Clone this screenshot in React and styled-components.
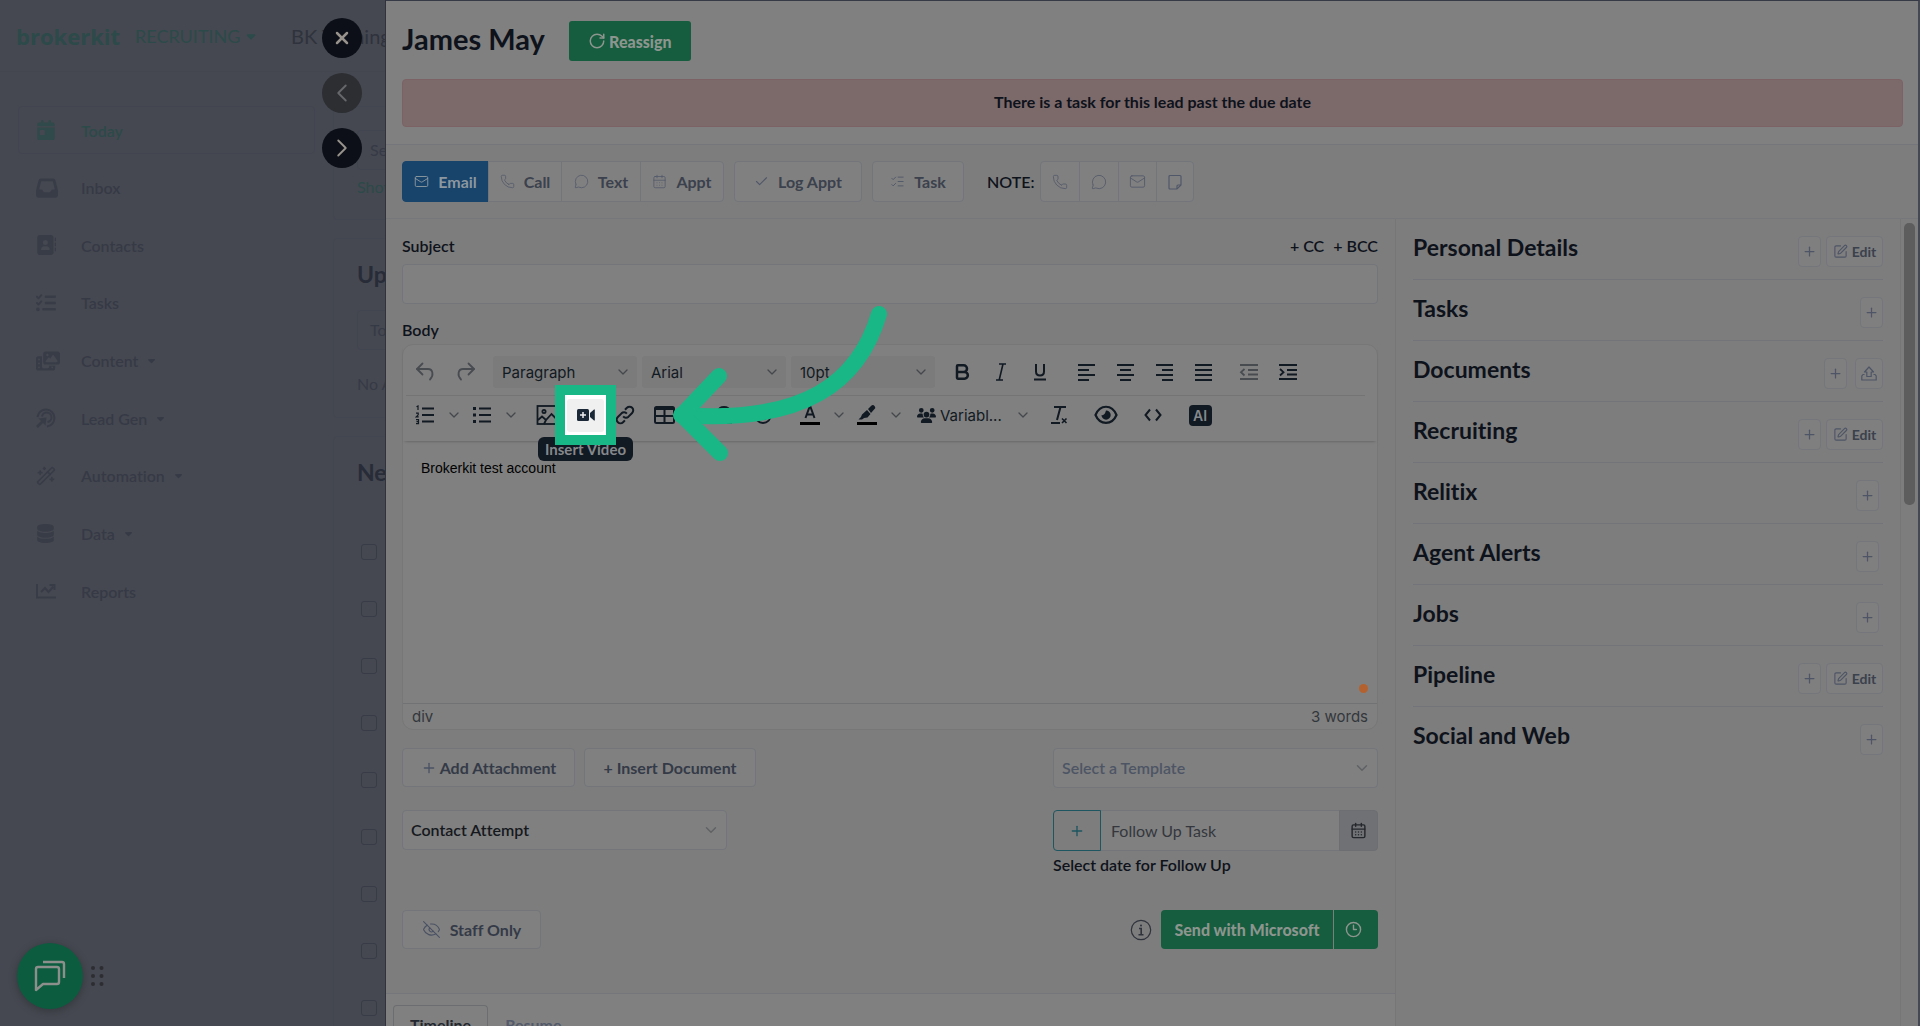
import React from "react";
import styled, { createGlobalStyle } from "styled-components";
import {
  Bold,
  CalendarDays,
  Check,
  ChevronDown,
  ChevronLeft,
  ChevronRight,
  Clock3,
  EyeOff,
  ListChecks,
  Mail,
  MessageCircle,
  Phone,
  Plus,
  RotateCw,
  SquarePen,
  WandSparkles,
  X,
} from "lucide-react";
import {
  FaAddressBook,
  FaCalendarDay,
  FaCaretDown,
  FaDatabase,
  FaInbox,
  FaListCheck,
  FaPhotoFilm,
  FaUsers,
} from "react-icons/fa6";

const colors = {
  shade: "#454850",
  shadeText: "#363a46",
  shadeGreen: "#2c4a49",
  surface: "#7d7d7d",
  white: "#808080",
  border: "#73757a",
  ink: "#0e121b",
  tool: "#111922",
  muted: "#3b414d",
  green: "#165c3e",
  accent: "#19b785",
};

const menu = [
  { label: "Today", icon: <FaCalendarDay size={20} />, active: true },
  { label: "Inbox", icon: <FaInbox size={22} /> },
  { label: "Contacts", icon: <FaAddressBook size={20} /> },
  { label: "Tasks", icon: <FaListCheck size={20} /> },
  { label: "Content", icon: <FaPhotoFilm size={24} />, more: true },
  { label: "Lead Gen", icon: <TargetIcon />, more: true },
  { label: "Automation", icon: <WandSparkles size={20} strokeWidth={2} />, more: true },
  { label: "Data", icon: <FaDatabase size={19} />, more: true },
  { label: "Reports", icon: <ReportIcon /> },
];

const sections = [
  { title: "Personal Details", edit: true },
  { title: "Tasks" },
  { title: "Documents", upload: true },
  { title: "Recruiting", edit: true },
  { title: "Relitix", inset: true },
  { title: "Agent Alerts", inset: true },
  { title: "Jobs", inset: true },
  { title: "Pipeline", edit: true },
  { title: "Social and Web" },
];

const leads = [1, 2, 3, 4, 5, 6, 7, 8, 9];

const App = () => {
  return (
    <Screen>
      <GlobalStyle />
      <Backdrop>
        <TopBar>
          <Logo>brokerkit</Logo>
          <Product>
            RECRUITING <FaCaretDown size={14} />
          </Product>
          <Account>BK Training</Account>
        </TopBar>
        <BackdropBody>
          <SideNav>
            {menu.map((item) => (
              <NavItem href="#" key={item.label} $active={item.active}>
                <NavIcon>{item.icon}</NavIcon>
                {item.label}
                {item.more && <FaCaretDown size={11} />}
              </NavItem>
            ))}
          </SideNav>
          <LeadColumn>
            <LeadCard $height={114}>
              <FakeField>Search</FakeField>
              <ShowLink href="#">Show</ShowLink>
            </LeadCard>
            <LeadCard $height={180}>
              <LeadTitle>Upcoming</LeadTitle>
              <FakeField>Today</FakeField>
              <EmptyText>No Appointments</EmptyText>
            </LeadCard>
            <LeadCard $height={640}>
              <LeadTitle>New Leads</LeadTitle>
              <CheckList>
                {leads.map((lead) => (
                  <LeadCheck key={lead} type="checkbox" aria-label={"Lead " + lead} />
                ))}
              </CheckList>
            </LeadCard>
          </LeadColumn>
        </BackdropBody>
        <DrawerControls>
          <RoundButton aria-label="Close">
            <X size={20} strokeWidth={3} />
          </RoundButton>
          <RoundButton aria-label="Previous" $dim>
            <ChevronLeft size={30} strokeWidth={1.5} />
          </RoundButton>
          <RoundButton aria-label="Next">
            <ChevronRight size={30} strokeWidth={1.5} />
          </RoundButton>
        </DrawerControls>
        <ChatWidget>
          <ChatButton aria-label="Chat">
            <ChatIcon />
          </ChatButton>
          <DotsIcon />
        </ChatWidget>
      </Backdrop>

      <Drawer>
        <DrawerHeader>
          <TitleRow>
            <Name>James May</Name>
            <GreenButton>
              <RotateCw size={18} strokeWidth={2} />
              Reassign
            </GreenButton>
          </TitleRow>
          <Alert>There is a task for this lead past the due date</Alert>
        </DrawerHeader>

        <ActionBar>
          <ButtonGroup>
            <ActionButton $primary $width={87}>
              <Mail size={15} strokeWidth={1.5} />
              Email
            </ActionButton>
            <ActionButton $width={74}>
              <Phone size={15} strokeWidth={1.2} />
              Call
            </ActionButton>
            <ActionButton $width={80}>
              <MessageCircle size={15} strokeWidth={1.2} />
              Text
            </ActionButton>
            <ActionButton $width={84}>
              <CalendarDays size={15} strokeWidth={1.2} />
              Appt
            </ActionButton>
          </ButtonGroup>
          <ActionButton $width={128}>
            <Check size={15} strokeWidth={1.8} />
            Log Appt
          </ActionButton>
          <ActionButton $width={92}>
            <ListChecks size={15} strokeWidth={1.5} />
            Task
          </ActionButton>
          <NoteLabel>NOTE:</NoteLabel>
          <ButtonGroup>
            <ActionButton $width={40} aria-label="Call note">
              <Phone size={16} strokeWidth={1.2} />
            </ActionButton>
            <ActionButton $width={40} aria-label="Text note">
              <MessageCircle size={16} strokeWidth={1.2} />
            </ActionButton>
            <ActionButton $width={39} aria-label="Email note">
              <Mail size={17} strokeWidth={1.2} />
            </ActionButton>
            <ActionButton $width={38} aria-label="Note">
              <NoteIcon />
            </ActionButton>
          </ButtonGroup>
        </ActionBar>

        <DrawerBody>
          <MainColumn>
            <Composer>
              <FieldHead>
                <label htmlFor="subject">Subject</label>
                <CopyLinks>
                  <a href="#">+ CC</a>
                  <a href="#">+ BCC</a>
                </CopyLinks>
              </FieldHead>
              <SubjectInput id="subject" type="text" />
              <BodyLabel>Body</BodyLabel>
              <Editor />

              <SplitRow>
                <Inline>
                  <BoxButton $width={173}>
                    <Plus size={16} strokeWidth={2} />
                    Add Attachment
                  </BoxButton>
                  <BoxButton $width={172}>+ Insert Document</BoxButton>
                </Inline>
                <SelectBox>
                  <Select aria-label="Template" $placeholder defaultValue="Select a Template">
                    <option>Select a Template</option>
                  </Select>
                  <ChevronDown size={18} strokeWidth={2} />
                </SelectBox>
              </SplitRow>

              <SplitRow>
                <SelectBox>
                  <Select aria-label="Type" defaultValue="Contact Attempt">
                    <option>Contact Attempt</option>
                  </Select>
                  <ChevronDown size={18} strokeWidth={2} />
                </SelectBox>
                <FollowUp>
                  <InputGroup>
                    <AddButton aria-label="Add follow up">
                      <Plus size={16} strokeWidth={2} />
                    </AddButton>
                    <FollowInput id="follow-up" type="text" placeholder="Follow Up Task" />
                    <DateButton aria-label="Pick a date">
                      <CalendarDays size={17} strokeWidth={2} />
                    </DateButton>
                  </InputGroup>
                  <label htmlFor="follow-up">Select date for Follow Up</label>
                </FollowUp>
              </SplitRow>

              <SendRow>
                <BoxButton $width={139} $gap={9}>
                  <EyeOff size={19} strokeWidth={1.4} />
                  Staff Only
                </BoxButton>
                <Inline>
                  <InfoIcon />
                  <SendGroup>
                    <SendButton>Send with Microsoft</SendButton>
                    <ScheduleButton aria-label="Schedule">
                      <Clock3 size={17} strokeWidth={2} />
                    </ScheduleButton>
                  </SendGroup>
                </Inline>
              </SendRow>
            </Composer>
            <Tabs>
              <Tab $active>Timeline</Tab>
              <Tab>Resume</Tab>
            </Tabs>
          </MainColumn>

          <Aside>
            {sections.map((section) => (
              <Section key={section.title} $inset={section.inset}>
                <h2>{section.title}</h2>
                <SectionButtons $wide={section.upload}>
                  <SmallButton aria-label={"Add to " + section.title}>
                    <Plus size={15} strokeWidth={2} />
                  </SmallButton>
                  {section.edit && (
                    <SmallButton $width={57}>
                      <SquarePen size={15} strokeWidth={1.8} />
                      Edit
                    </SmallButton>
                  )}
                  {section.upload && (
                    <SmallButton $width={28} aria-label="Upload">
                      <UploadIcon />
                    </SmallButton>
                  )}
                </SectionButtons>
              </Section>
            ))}
          </Aside>
          <ScrollTrack>
            <ScrollThumb />
          </ScrollTrack>
        </DrawerBody>
      </Drawer>
    </Screen>
  );
};

export default App;

const Editor = () => {
  return (
    <EditorFrame>
      <Toolbar>
        <ToolRow>
          <ToolGroup $gap={3}>
            <Tool $dim aria-label="Undo">
              <UndoIcon />
            </Tool>
            <Tool $dim aria-label="Redo">
              <UndoIcon flip />
            </Tool>
          </ToolGroup>
          <SelectGroup>
            {["Paragraph", "Arial", "10pt"].map((value) => (
              <FormatBox key={value}>
                <FormatSelect aria-label={value} defaultValue={value}>
                  <option>{value}</option>
                </FormatSelect>
                <ChevronDown size={16} strokeWidth={2} />
              </FormatBox>
            ))}
          </SelectGroup>
          <ToolGroup>
            <Tool aria-label="Bold">
              <Bold size={20} strokeWidth={3} />
            </Tool>
            <Tool aria-label="Italic">
              <ItalicIcon />
            </Tool>
            <Tool aria-label="Underline">
              <UnderlineIcon />
            </Tool>
          </ToolGroup>
          <ToolGroup>
            {["left", "center", "right", "full"].map((side) => (
              <Tool key={side} aria-label={"Align " + side}>
                <AlignIcon side={side} />
              </Tool>
            ))}
          </ToolGroup>
          <ToolGroup>
            <Tool $dim aria-label="Outdent">
              <IndentIcon flip />
            </Tool>
            <Tool aria-label="Indent">
              <IndentIcon />
            </Tool>
          </ToolGroup>
        </ToolRow>
        <ToolRow $second>
          <ToolGroup>
            <Tool aria-label="Numbered list">
              <ListIcon numbered />
            </Tool>
            <SplitArrow />
            <Tool aria-label="Bullet list">
              <ListIcon />
            </Tool>
            <SplitArrow />
          </ToolGroup>
          <ToolGroup>
            <Tool aria-label="Image">
              <ImageIcon />
            </Tool>
            <Spot>
              <Tooltip>Insert Video</Tooltip>
              <VideoFrame>
                <VideoButton aria-label="Insert Video">
                  <VideoIcon />
                </VideoButton>
              </VideoFrame>
              <PointerArrow />
            </Spot>
            <Tool aria-label="Link">
              <LinkIcon />
            </Tool>
            <Tool aria-label="Table">
              <TableIcon />
            </Tool>
          </ToolGroup>
          <ToolGroup $start={13}>
            <Tool aria-label="Special character">
              <OmegaIcon />
            </Tool>
            <Tool aria-label="Emoji">
              <SmileIcon />
            </Tool>
          </ToolGroup>
          <ToolGroup>
            <Tool aria-label="Text color">
              <TextColorIcon />
            </Tool>
            <SplitArrow />
            <Tool aria-label="Highlight">
              <MarkerIcon />
            </Tool>
            <SplitArrow />
          </ToolGroup>
          <VariableButton>
            <FaUsers size={19} />
            <span>Variabl...</span>
            <ChevronDown size={16} strokeWidth={2} />
          </VariableButton>
          <ToolGroup $gap={9}>
            <Tool aria-label="Clear formatting">
              <ClearIcon />
            </Tool>
            <Tool aria-label="Preview">
              <EyeIcon />
            </Tool>
            <Tool aria-label="Source code">
              <CodeIcon />
            </Tool>
            <Tool>
              <AiBadge>AI</AiBadge>
            </Tool>
          </ToolGroup>
        </ToolRow>
      </Toolbar>
      <EditArea>
        Brokerkit test account
        <StatusDot />
      </EditArea>
      <StatusBar>
        <span>div</span>
        <span>3 words</span>
      </StatusBar>
    </EditorFrame>
  );
};

const SplitArrow = () => (
  <ArrowButton aria-label="More options">
    <ChevronDown size={16} strokeWidth={2} />
  </ArrowButton>
);

/* ---------- icons ---------- */

function TargetIcon() {
  return (
    <svg width="20" height="20" viewBox="0 0 20 20" fill="none" stroke="currentColor" strokeWidth="2">
      <path d="M1.500 9a8.500 8.500 0 1 1 9.500 9.500" />
      <path d="M6 8.500a4.800 4.800 0 1 1 5.500 5.500" />
      <path d="M1 19l6-6" strokeWidth="2.600" />
      <path d="M2.500 10.500L10.500 9.500 9.500 17.500z" fill="currentColor" stroke="none" />
    </svg>
  );
}

function ReportIcon() {
  return (
    <svg width="20" height="16" viewBox="0 0 20 16" fill="none" stroke="currentColor" strokeWidth="2">
      <path d="M1 1v13.500h19" />
      <path d="M5 9l4-4 3.500 4 5-5.500" />
      <path d="M13.500 2H18.500V7" />
    </svg>
  );
}

const ChatIcon = () => (
  <svg width="32" height="32" viewBox="0 0 32 32" fill="none" stroke="#8d8f8d" strokeWidth="2.400">
    <path d="M2 30V9q0-2 2-2h19q2 0 2 2v13q0 2-2 2H9z" strokeLinejoin="round" />
    <path d="M9 2h19q2 0 2 2v14" />
  </svg>
);

const DotsIcon = () => (
  <svg width="13" height="22" viewBox="0 0 13 22" fill="#2c2d31">
    {[3, 11, 19].map((y) => (
      <g key={y}>
        <circle cx="2" cy={y} r="2" />
        <circle cx="10.500" cy={y} r="2" />
      </g>
    ))}
  </svg>
);

const NoteIcon = () => (
  <svg width="14" height="16" viewBox="0 0 14 16" fill="none" stroke="currentColor" strokeWidth="1.200">
    <path d="M1 2.500Q1 1.500 2 1.500h10q1 0 1 1V11l-4 4H2q-1 0-1-1z" />
    <path d="M9 15v-3q0-1 1-1h3" />
  </svg>
);

const InfoIcon = () => (
  <svg width="22" height="22" viewBox="0 0 22 22" fill="none" stroke="#2f333c" strokeWidth="1.200">
    <circle cx="11" cy="11" r="9.700" />
    <path d="M9 9.500h2.200V15.500M8.500 15.700h5" strokeWidth="1.600" />
    <circle cx="11" cy="6.500" r="1" fill="#2f333c" stroke="none" />
  </svg>
);

const UploadIcon = () => (
  <svg width="16" height="15" viewBox="0 0 16 15" fill="none" stroke="currentColor" strokeWidth="1.200">
    <path d="M3.500 8.500H2L.8 10v4h14.400v-4L14 8.500h-1.500" />
    <path d="M8 1L3.500 6h2.300v4.500h4.400V6h2.300z" strokeLinejoin="round" />
  </svg>
);

const UndoIcon = ({ flip }) => (
  <svg width="20" height="20" viewBox="0 0 20 20" fill="none" stroke="currentColor" strokeWidth="1.800">
    <g transform={flip ? "matrix(-1 0 0 1 20 0)" : undefined} strokeLinecap="round">
      <path d="M7.500 1.500L2 7l5.500 5.500" strokeLinejoin="round" />
      <path d="M2 7h11c5 0 6 6.500 2 10.500" />
    </g>
  </svg>
);

const ItalicIcon = () => (
  <svg width="12" height="20" viewBox="0 0 12 20" fill="none" stroke="currentColor" strokeWidth="1.600">
    <path d="M4 2h7M1 18h7M8 2L4.200 18" />
  </svg>
);

const UnderlineIcon = () => (
  <svg width="14" height="20" viewBox="0 0 14 20" fill="none" stroke="currentColor" strokeWidth="2">
    <path d="M3 2v7.500q0 4 4 4t4-4V2" />
    <path d="M1 17.500h12" />
  </svg>
);

const alignLines = {
  left: "M1 2h17M1 7h11M1 12h17M1 17h11",
  center: "M1 2h17M4 7h11M1 12h17M4 17h11",
  right: "M1 2h17M7 7h11M1 12h17M7 17h11",
  full: "M1 2h17M1 7h17M1 12h17M1 17h17",
};

const AlignIcon = ({ side }) => (
  <svg width="19" height="19" viewBox="0 0 19 19" fill="none" stroke="currentColor" strokeWidth="2">
    <path d={alignLines[side]} />
  </svg>
);

const IndentIcon = ({ flip }) => (
  <svg width="20" height="18" viewBox="0 0 20 18" fill="none" stroke="currentColor" strokeWidth="2">
    <path d="M1 2h18M9 7h10M9 11.500h10M1 16h18" />
    <path d={flip ? "M5.500 6L2 9.200l3.500 3.300" : "M2 6l3.500 3.200L2 12.500"} strokeWidth="1.800" />
  </svg>
);

const ListIcon = ({ numbered }) => (
  <svg width="20" height="20" viewBox="0 0 20 20" fill="none" stroke="currentColor" strokeWidth="2">
    <path d="M7 3.500h12M7 10h12M7 16.500h12" />
    {numbered ? (
      <path
        d="M1.500 1.800L3 1v4M1 8.200h2.200v1.600L1.200 11.800h2.500M1 14.600h2.500v4H1M1.500 16.600h2"
        strokeWidth="1.200"
      />
    ) : (
      <path d="M1 3.500h3M1 10h3M1 16.500h3" strokeWidth="3" />
    )}
  </svg>
);

const ImageIcon = () => (
  <svg width="22" height="20" viewBox="0 0 22 20" fill="none" stroke="currentColor" strokeWidth="1.800">
    <rect x="1.500" y="1" width="19" height="18" />
    <circle cx="8" cy="6.500" r="1.600" />
    <path d="M2 15l4-3.500 4 3.500 5.500-6 5 5M8 19l2-4" />
  </svg>
);

const VideoIcon = () => (
  <svg width="18" height="12" viewBox="0 0 18 12" fill="#1b2838">
    <rect x="0" y="0" width="12" height="12" rx="1.500" />
    <path d="M13 4l4-3.500h.8v11H17L13 8z" />
    <path d="M6 3v6M3 6h6" stroke="#f0f0f0" strokeWidth="1.500" />
  </svg>
);

const LinkIcon = () => (
  <svg width="22" height="22" viewBox="0 0 24 24" fill="none" stroke="currentColor" strokeWidth="2.200">
    <path d="M10 13.500a4 4 0 0 0 5.800.3l4-4a4 4 0 0 0-5.700-5.700L12 6.200" />
    <path d="M14 10.500a4 4 0 0 0-5.800-.3l-4 4a4 4 0 0 0 5.700 5.700l2-2" />
  </svg>
);

const TableIcon = () => (
  <svg width="21" height="18" viewBox="0 0 21 18" fill="none" stroke="currentColor" strokeWidth="2">
    <rect x="1" y="1" width="19" height="16" rx="1.500" />
    <path d="M1 2.500h19" strokeWidth="3" />
    <path d="M1 10h19M10.500 3v14" />
  </svg>
);

const OmegaIcon = () => (
  <svg width="18" height="18" viewBox="0 0 18 18" fill="none" stroke="currentColor" strokeWidth="2">
    <path d="M1 16.500h5v-2C-1 9 3 1 9 1s10 8 3 13.500v2h5" />
  </svg>
);

const SmileIcon = () => (
  <svg width="18" height="18" viewBox="0 0 18 18" fill="none" stroke="currentColor" strokeWidth="1.800">
    <circle cx="9" cy="9" r="8" />
    <path d="M5 11q4 4 8 0" />
  </svg>
);

const TextColorIcon = () => (
  <svg width="20" height="20" viewBox="0 0 20 20" fill="none" stroke="currentColor" strokeWidth="2">
    <path d="M5.500 13L9.500 2h1L14.500 13M7 9.500h6" />
    <path d="M0 18.500h20" stroke="#000" strokeWidth="3" />
  </svg>
);

const MarkerIcon = () => (
  <svg width="20" height="20" viewBox="0 0 20 20" fill="currentColor">
    <path d="M11 4l3-3q2-2 3.500 0t0 3L14 8zM10 5l3.500 4-3 3.500q-4 0-5.500 2H1.500q3-2 3.500-5z" />
    <path d="M0 18.500h20" stroke="#000" strokeWidth="3" />
  </svg>
);

const ClearIcon = () => (
  <svg width="18" height="20" viewBox="0 0 18 20" fill="none" stroke="currentColor" strokeWidth="2">
    <path d="M4 2h12M10.500 2L7 15M1 18h9" />
    <path d="M12 13.500l4.500 4.500M16.500 13.500L12 18" strokeWidth="1.600" />
  </svg>
);

const EyeIcon = () => (
  <svg width="24" height="20" viewBox="0 0 24 20" fill="none" stroke="currentColor" strokeWidth="2.200">
    <path d="M1.500 10C6-1 18-1 22.500 10 18 20.500 6 20.500 1.500 10z" />
    <path d="M12 5.500a4.600 4.600 0 1 1-4.500 4.500q3 1 4.500-4.500z" fill="currentColor" stroke="none" />
  </svg>
);

const CodeIcon = () => (
  <svg width="18" height="14" viewBox="0 0 18 14" fill="none" stroke="currentColor" strokeWidth="2">
    <path d="M6 1.500L1.500 7 6 12.500M12 1.500L16.500 7 12 12.500" />
  </svg>
);

const PointerArrow = () => (
  <ArrowSvg width="220" height="170" viewBox="0 0 220 170" fill="none" stroke={colors.accent}>
    <path d="M208 14C188 82 134 124 10 115" strokeWidth="16" strokeLinecap="round" />
    <path d="M48 76L11 115l38 38" strokeWidth="16" strokeLinecap="round" strokeLinejoin="round" />
  </ArrowSvg>
);

/* ---------- styles ---------- */

const GlobalStyle = createGlobalStyle`
  * {
    box-sizing: border-box;
  }

  body {
    margin: 0;
    background: ${colors.shade};
    font-family: Lato, "Open Sans", sans-serif;
    font-size: 16px;
    font-variant-ligatures: none;
    color: ${colors.ink};
  }

  button, input, select {
    font: inherit;
    color: inherit;
    margin: 0;
  }

  button {
    padding: 0;
    cursor: pointer;
  }

  a {
    color: inherit;
    text-decoration: none;
  }
`;

const Screen = styled.div`
  display: flex;
  height: 100vh;
  overflow: hidden;
`;

const Backdrop = styled.div`
  position: relative;
  flex: 0 0 386px;
  overflow: hidden;
  color: ${colors.shadeText};
  border-right: 1px solid #30333c;
`;

const TopBar = styled.header`
  display: flex;
  align-items: center;
  height: 72px;
  padding-left: 16px;
  white-space: nowrap;
  border-bottom: 1px solid #43464f;
`;

const Logo = styled.span`
  flex: 0 0 119px;
  font-family: "Open Sans", sans-serif;
  font-size: 22px;
  font-weight: 700;
  color: ${colors.shadeGreen};
`;

const Product = styled.span`
  display: flex;
  align-items: center;
  gap: 4px;
  flex: 0 0 156px;
  font-size: 18px;
  color: ${colors.shadeGreen};
`;

const Account = styled.span`
  font-size: 20px;
  color: #2f333d;
`;

const BackdropBody = styled.div`
  display: flex;
  gap: 18px;
  padding: 34px 0 0 18px;
`;

const SideNav = styled.nav`
  display: flex;
  flex-direction: column;
  justify-content: space-between;
  flex: 0 0 297px;
  height: 509px;
`;

const NavItem = styled.a`
  display: flex;
  align-items: center;
  gap: 8px;
  height: 48px;
  padding-left: 17px;
  border: 1px solid ${(props) => (props.$active ? "#424550" : "transparent")};
  border-radius: 4px;
  font-weight: 600;
  color: ${(props) => (props.$active ? colors.shadeGreen : colors.shadeText)};
`;

const NavIcon = styled.span`
  display: flex;
  width: 37px;
  opacity: 0.8;
`;

const LeadColumn = styled.div`
  display: flex;
  flex-direction: column;
  gap: 18px;
  flex: 0 0 400px;
`;

const LeadCard = styled.section`
  height: ${(props) => props.$height}px;
  padding: 23px;
  border: 1px solid #414650;
  border-radius: 4px;
`;

const FakeField = styled.div`
  height: 40px;
  padding: 9px 12px;
  border: 1px solid #404550;
  border-radius: 4px;
`;

const ShowLink = styled.a`
  display: block;
  margin-top: 7px;
  color: ${colors.shadeGreen};
`;

const LeadTitle = styled.h2`
  margin: 0 0 24px;
  font-size: 23px;
  line-height: 24px;
  color: #272c38;
`;

const EmptyText = styled.p`
  margin: 24px 0 0;
`;

const CheckList = styled.div`
  display: flex;
  flex-direction: column;
  gap: 41px;
  padding: 36px 0 0 4px;
`;

const LeadCheck = styled.input`
  appearance: none;
  width: 16px;
  height: 16px;
  border: 1px solid #383c46;
  border-radius: 3px;
`;

const DrawerControls = styled.div`
  position: absolute;
  top: 18px;
  right: 23px;
  display: flex;
  flex-direction: column;
  gap: 15px;
`;

const RoundButton = styled.button`
  display: flex;
  align-items: center;
  justify-content: center;
  width: 40px;
  height: 40px;
  border: 0;
  border-radius: 50%;
  background: ${(props) => (props.$dim ? "#2c2e32" : "#0c0f17")};
  color: ${(props) => (props.$dim ? "#66676a" : "#97938c")};
`;

const ChatWidget = styled.div`
  position: absolute;
  left: 17px;
  bottom: 17px;
  display: flex;
  align-items: center;
  gap: 8px;
`;

const ChatButton = styled.button`
  display: flex;
  align-items: center;
  justify-content: center;
  width: 66px;
  height: 66px;
  border: 0;
  border-radius: 50%;
  background: #0c5c3f;
  box-shadow: 0 2px 8px rgba(0, 0, 0, 0.25);
`;

const Drawer = styled.main`
  display: flex;
  flex-direction: column;
  flex: 1;
  min-width: 0;
  border-top: 1px solid #363a46;
  border-right: 2px solid #444852;
  background: ${colors.surface};
`;

const DrawerHeader = styled.header`
  padding: 20px 15px 17px 16px;
  border-bottom: 1px solid #74767c;
  background: ${colors.white};
`;

const TitleRow = styled.div`
  display: flex;
  align-items: flex-start;
  gap: 24px;
  margin-bottom: 18px;
`;

const Name = styled.h1`
  margin: 0;
  font-size: 29px;
  line-height: 36px;
  font-weight: 700;
`;

const GreenButton = styled.button`
  display: flex;
  align-items: center;
  justify-content: center;
  gap: 3px;
  width: 122px;
  height: 40px;
  border: 0;
  border-radius: 3px;
  background: ${colors.green};
  color: #8c958e;
  font-weight: 900;
`;

const Alert = styled.div`
  height: 48px;
  border: 1px solid #7c6264;
  border-radius: 4px;
  background: #7c6a6b;
  font-weight: 700;
  line-height: 43px;
  text-align: center;
`;

const ActionBar = styled.div`
  display: flex;
  align-items: center;
  gap: 10px;
  padding: 16px 15px 16px 16px;
  border-bottom: 1px solid #76777a;
`;

const ButtonGroup = styled.div`
  display: flex;

  button {
    border-radius: 0;
  }

  button + button {
    margin-left: -1px;
  }

  button:first-child {
    border-radius: 4px 0 0 4px;
  }

  button:last-child {
    border-radius: 0 4px 4px 0;
  }
`;

const ActionButton = styled.button`
  display: flex;
  align-items: center;
  justify-content: center;
  gap: 9px;
  width: ${(props) => props.$width}px;
  height: 41px;
  border: 1px solid ${(props) => (props.$primary ? "#18436b" : colors.border)};
  border-radius: 4px;
  background: ${(props) => (props.$primary ? "#18436b" : colors.white)};
  color: ${(props) => (props.$primary ? "#8c979f" : colors.muted)};
  font-weight: 700;

  svg {
    color: ${(props) => (props.$primary ? "#8c979f" : "#505768")};
  }
`;

const NoteLabel = styled.span`
  margin-left: 13px;
  margin-right: -5px;
  font-weight: 600;
`;

const DrawerBody = styled.div`
  display: flex;
  flex: 1;
  min-height: 0;
  overflow: hidden;
`;

const MainColumn = styled.div`
  display: flex;
  flex-direction: column;
  flex: 1;
  min-width: 0;
`;

const Composer = styled.div`
  padding: 17px 17px 44px 16px;
  border-bottom: 1px solid #74767c;
`;

const FieldHead = styled.div`
  display: flex;
  justify-content: space-between;
  margin-bottom: 8px;
  font-weight: 600;
  line-height: 20px;
`;

const CopyLinks = styled.span`
  display: flex;
  gap: 9px;
`;

const SubjectInput = styled.input`
  display: block;
  width: 100%;
  height: 40px;
  padding: 0 10px;
  border: 1px solid ${colors.border};
  border-radius: 4px;
  background: ${colors.white};
`;

const BodyLabel = styled.div`
  margin: 16px 0 4px;
  font-weight: 600;
  line-height: 20px;
`;

const EditorFrame = styled.div`
  display: flex;
  flex-direction: column;
  margin-bottom: 18px;
  border: 1px solid #777;
  border-radius: 11px;
  background: ${colors.white};
  font-family: Inter, sans-serif;
  font-size: 15px;
  color: ${colors.tool};
`;

const Toolbar = styled.div`
  padding: 4px 12px 7px 3px;
  box-shadow: 0 2px 3px -2px rgba(0, 0, 0, 0.35);
`;

const ToolRow = styled.div`
  display: flex;
  align-items: center;
  gap: ${(props) => (props.$second ? 9 : 8)}px;
  height: ${(props) => (props.$second ? 39 : 46)}px;
  border-top: ${(props) => (props.$second ? "1px solid #747474" : "0")};
`;

const ToolGroup = styled.div`
  display: flex;
  align-items: center;
  gap: ${(props) => props.$gap || 1}px;
  margin-left: ${(props) => props.$start || 0}px;
`;

const SelectGroup = styled.div`
  display: flex;
  gap: 5px;
`;

const Tool = styled.button`
  display: flex;
  align-items: center;
  justify-content: center;
  width: 38px;
  height: 32px;
  border: 0;
  background: none;
  color: ${(props) => (props.$dim ? "#484c51" : colors.tool)};
`;

const ArrowButton = styled(Tool)`
  width: 17px;
  color: #44484d;
`;

const FormatBox = styled.div`
  position: relative;
  width: 144px;

  svg {
    position: absolute;
    top: 8px;
    right: 6px;
    color: #44484d;
    pointer-events: none;
  }
`;

const FormatSelect = styled.select`
  appearance: none;
  display: block;
  width: 100%;
  height: 32px;
  padding: 0 9px;
  border: 0;
  border-radius: 3px;
  background: #7b7b7b;
`;

const Spot = styled.div`
  position: relative;
  width: 38px;
  height: 32px;
`;

const VideoFrame = styled.div`
  position: absolute;
  top: -14px;
  left: -12px;
  z-index: 2;
  display: flex;
  align-items: center;
  justify-content: center;
  width: 61px;
  height: 60px;
  border: 10px solid ${colors.accent};
  background: #fff;
`;

const VideoButton = styled.button`
  display: flex;
  align-items: center;
  justify-content: center;
  width: 37px;
  height: 33px;
  border: 0;
  border-radius: 3px;
  background: #f0f0f0;
`;

const Tooltip = styled.div`
  position: absolute;
  top: 38px;
  left: -29px;
  z-index: 1;
  width: 95px;
  height: 24px;
  border-radius: 6px;
  background: ${colors.tool};
  color: #85888c;
  font-family: Lato, sans-serif;
  font-weight: 700;
  line-height: 24px;
  text-align: center;
  white-space: nowrap;
`;

const ArrowSvg = styled.svg`
  position: absolute;
  top: -99px;
  left: 104px;
  z-index: 3;
  pointer-events: none;
`;

const VariableButton = styled.button`
  display: flex;
  align-items: center;
  gap: 4px;
  width: 118px;
  height: 32px;
  padding-left: 4px;
  border: 0;
  background: none;

  svg:last-child {
    margin-left: auto;
    color: #44484d;
  }
`;

const AiBadge = styled.span`
  width: 23px;
  height: 21px;
  border-radius: 4px;
  background: ${colors.tool};
  color: #85888c;
  font-size: 14px;
  font-weight: 600;
  line-height: 21px;
`;

const EditArea = styled.div`
  position: relative;
  height: 262px;
  padding: 19px 18px;
  color: #000;
  font-family: "Liberation Sans", Arial, sans-serif;
  font-size: 14px;
`;

const StatusDot = styled.span`
  position: absolute;
  right: 9px;
  bottom: 10px;
  width: 9px;
  height: 9px;
  border-radius: 50%;
  background: #b3622f;
`;

const StatusBar = styled.div`
  display: flex;
  justify-content: space-between;
  height: 26px;
  padding: 0 9px;
  border-top: 1px solid #717274;
  line-height: 25px;
  color: #33373c;
`;

const SplitRow = styled.div`
  display: flex;
  align-items: flex-start;
  justify-content: space-between;
  margin-bottom: 22px;
`;

const Inline = styled.div`
  display: flex;
  align-items: center;
  gap: 9px;
`;

const BoxButton = styled.button`
  display: flex;
  align-items: center;
  justify-content: center;
  gap: ${(props) => props.$gap || 3}px;
  width: ${(props) => props.$width}px;
  height: 39px;
  border: 1px solid ${colors.border};
  border-radius: 4px;
  background: ${colors.white};
  color: #343a47;
  font-weight: 700;

  svg {
    color: #4a5163;
  }
`;

const SelectBox = styled.div`
  position: relative;
  width: 325px;

  svg {
    position: absolute;
    top: 11px;
    right: 7px;
    color: #5f6164;
    pointer-events: none;
  }
`;

const Select = styled.select`
  appearance: none;
  display: block;
  width: 100%;
  height: 40px;
  padding: 0 8px 2px;
  border: 1px solid ${colors.border};
  border-radius: 4px;
  background: ${colors.white};
  color: ${(props) => (props.$placeholder ? "#4d5565" : "#15181d")};
  font-weight: 600;
`;

const FollowUp = styled.div`
  width: 325px;
  font-weight: 600;
  line-height: 28px;
`;

const InputGroup = styled.div`
  display: flex;
  height: 41px;
`;

const AddButton = styled.button`
  display: flex;
  align-items: center;
  justify-content: center;
  width: 48px;
  border: 1px solid #1d5560;
  border-radius: 4px 0 0 4px;
  background: none;
  color: #1d5560;
`;

const FollowInput = styled.input`
  flex: 1;
  min-width: 0;
  padding: 0 10px;
  border: 1px solid ${colors.border};
  border-width: 1px 0;
  background: ${colors.white};
  font-weight: 400;

  &::placeholder {
    color: #34373d;
  }
`;

const DateButton = styled.button`
  display: flex;
  align-items: center;
  justify-content: center;
  width: 39px;
  border: 1px solid #6c6e71;
  border-radius: 0 4px 4px 0;
  background: #6f7174;
  color: #24272c;
`;

const SendRow = styled.div`
  display: flex;
  align-items: center;
  justify-content: space-between;
  margin-top: 31px;
`;

const SendGroup = styled.div`
  display: flex;
  gap: 1px;
`;

const SendButton = styled.button`
  width: 172px;
  height: 39px;
  border: 0;
  border-radius: 4px 0 0 4px;
  background: ${colors.green};
  color: #8c958e;
  font-weight: 900;
`;

const ScheduleButton = styled(SendButton)`
  display: flex;
  align-items: center;
  justify-content: center;
  width: 44px;
  padding-right: 6px;
  border-radius: 0 4px 4px 0;
`;

const Tabs = styled.div`
  display: flex;
  align-items: flex-start;
  flex: 1;
  padding: 11px 7px 0;
  background: ${colors.white};
`;

const Tab = styled.button`
  height: 38px;
  padding: 0 16px;
  border: 1px solid ${(props) => (props.$active ? "#6c6d70" : "transparent")};
  border-bottom: 0;
  border-radius: 4px 4px 0 0;
  background: none;
  color: ${(props) => (props.$active ? "#23272f" : "#525a6b")};
  font-weight: 700;
`;

const Aside = styled.aside`
  flex: 0 0 506px;
  padding: 0 17px 0 17px;
  border-left: 1px solid #767676;
  border-right: 1px solid #767676;
`;

const Section = styled.section`
  display: flex;
  align-items: flex-start;
  justify-content: space-between;
  height: 61px;
  padding: 17px ${(props) => (props.$inset ? 4 : 0)}px 0 0;
  border-bottom: 1px solid #727479;

  &:last-child {
    border-bottom: 0;
  }

  h2 {
    margin: 0;
    font-size: 23px;
    line-height: 22px;
    font-weight: 700;
  }
`;

const SectionButtons = styled.div`
  display: flex;
  gap: ${(props) => (props.$wide ? 8 : 5)}px;
`;

const SmallButton = styled.button`
  display: flex;
  align-items: center;
  justify-content: center;
  gap: 4px;
  width: ${(props) => props.$width || 23}px;
  height: 31px;
  border: 1px solid #74767b;
  border-radius: 4px;
  background: #7f7f7f;
  color: ${colors.muted};
  font-size: 14px;
  font-weight: 700;

  svg {
    color: #4e5566;
  }
`;

const ScrollTrack = styled.div`
  flex: 0 0 17px;
  padding: 4px 3px;
`;

const ScrollThumb = styled.div`
  height: 282px;
  border-radius: 5px;
  background: #5d5d5d;
`;
